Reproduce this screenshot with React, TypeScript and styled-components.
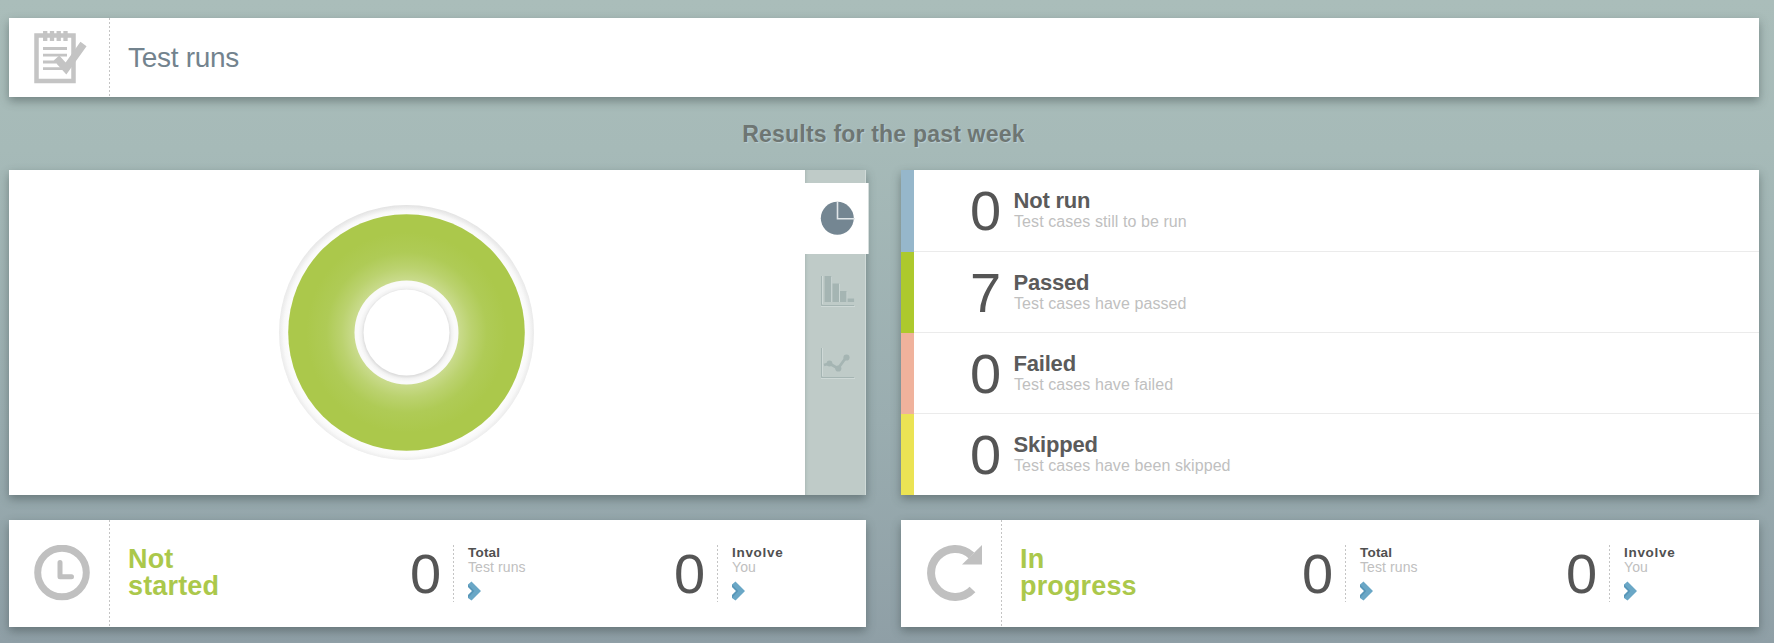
import React from "react";
import styled, { createGlobalStyle } from "styled-components";

const Global = createGlobalStyle`
  * { box-sizing: border-box; }
  body {
    margin: 0;
    font-family: "Liberation Sans", Arial, sans-serif;
    color: #555;
  }
`;

const Page = styled.main`
  height: 643px;
  padding: 18px 15px 0 9px;
  overflow: hidden;
  background: linear-gradient(#aabdba 0, #a6bab8 150px, #9aadb0 420px, #8f9fa6 643px);
`;

const Card = styled.section`
  display: flex;
  background: #fff;
  box-shadow: 0 4px 9px rgba(50, 65, 65, 0.45);
`;

const Header = styled(Card)`
  height: 79px;
`;

const IconCell = styled.div`
  display: flex;
  flex: 0 0 101px;
  align-items: center;
  padding: 0 0 2px 25px;
  background: linear-gradient(#c4c4c4 50%, transparent 50%) right top / 1px 4px repeat-y;
`;

const PageTitle = styled.h1`
  margin: 0 0 0 18px;
  font-size: 28px;
  font-weight: 400;
  line-height: 79px;
  letter-spacing: -0.3px;
  color: #73838e;
`;

const Subtitle = styled.h2`
  margin: 0 0 0 -1px;
  height: 73px;
  line-height: 75px;
  font-size: 23px;
  letter-spacing: 0.2px;
  text-align: center;
  color: #6e7673;
  text-shadow: 1px 1px 1px #bccfd3;
`;

const Columns = styled.div<{ $height: number }>`
  display: grid;
  grid-template-columns: 857px 858px;
  column-gap: 35px;
  height: ${(p) => p.$height}px;
  margin-bottom: 25px;
`;

const ChartArea = styled.div`
  flex: 1;
  padding: 34px 0 0 269px;
`;

const Tabs = styled.nav`
  width: 61px;
  padding-top: 13px;
  background: linear-gradient(90deg, #aebbb8 0, #b9c7c4 2px, #bfcbc8 4px, #bfcbc8 60px, #d0dad8 60px);
`;

const Tab = styled.div<{ $active?: boolean }>`
  width: ${(p) => (p.$active ? 64 : 61)}px;
  height: ${(p) => (p.$active ? 71 : 73)}px;
  padding: ${(p) => (p.$active ? 18 : 20)}px 0 0 15px;
  background: ${(p) => (p.$active ? "#fff" : "transparent")};
  border-right: ${(p) => (p.$active ? "1px solid #d5dddc" : "0")};
  svg { display: block; }
`;

const Results = styled(Card)`
  flex-direction: column;
`;

const ResultRow = styled.div<{ $color: string }>`
  display: flex;
  height: 81px;
  border-left: 13px solid ${(p) => p.$color};
  background: linear-gradient(#ebebeb, #ebebeb) left bottom / 100% 1px no-repeat;
  &:first-child { height: 82px; }
  &:last-child { background: none; }
`;

const BigNumber = styled.div`
  width: 32px;
  font-size: 56px;
  line-height: 64px;
  letter-spacing: -1px;
  color: #555;
`;

const ResultNumber = styled(BigNumber)`
  margin: 9px 0 0 56px;
`;

const ResultText = styled.div`
  padding: 18px 0 0 12px;
`;

const ResultName = styled.div`
  margin-left: -0.5px;
  font-size: 22px;
  font-weight: 700;
  line-height: 25px;
  letter-spacing: -0.2px;
  color: #5b5b5b;
`;

const ResultNote = styled.div`
  margin-top: 1px;
  font-size: 16px;
  line-height: 16px;
  letter-spacing: 0.08px;
  color: #c0c0c0;
`;

const RunState = styled.h3`
  width: 277px;
  margin: 26px 0 0 18px;
  font-size: 27px;
  line-height: 27px;
  letter-spacing: 0.15px;
  color: #abc84b;
`;

const Stat = styled.div<{ $width: number }>`
  display: flex;
  width: ${(p) => p.$width}px;
  padding-top: 25px;
`;

const StatNumber = styled(BigNumber)`
  width: 48px;
  padding-left: 5px;
  margin-top: -3px;
`;

const StatText = styled.div`
  height: 57px;
  padding-left: 15px;
  background: linear-gradient(#c4c4c4 50%, transparent 50%) left top / 1px 4px repeat-y;
`;

const StatLabel = styled.div<{ $tracking: number }>`
  font-size: 13.500px;
  font-weight: 700;
  line-height: 15px;
  letter-spacing: ${(p) => p.$tracking}px;
  color: #505050;
`;

const StatNote = styled.div`
  font-size: 14px;
  line-height: 14px;
  letter-spacing: 0.1px;
  color: #c0c0c0;
`;

const Arrow = styled.svg`
  display: block;
  margin-top: 7px;
`;

function NotepadIcon() {
  return (
    <svg width="54" height="54" viewBox="0 0 54 54" fill="none" stroke="#c4c4c4">
      <path d="M2.500 5.500v45.500h37V5.500z" strokeWidth="4.500" />
      <path d="M11.200 1v10M18 1v10M24.700 1v10M31.500 1v10" strokeWidth="4.300" />
      <path d="M9 18.500h24M9 25.200h24M9 32h13M9 38.700h24" strokeWidth="2.800" />
      <path d="M22.500 28l9.500 10.500L49.500 14" stroke="#c4c4c4" strokeWidth="7.500" />
    </svg>
  );
}

function ClockIcon() {
  return (
    <svg width="56" height="56" viewBox="0 0 56 56" fill="none" stroke="#c0c0c0">
      <circle cx="28" cy="27.500" r="24.300" strokeWidth="7" />
      <path d="M26 17.500v14.300h11.500" strokeWidth="5" strokeLinecap="round" strokeLinejoin="round" />
    </svg>
  );
}

function RefreshIcon() {
  return (
    <svg width="56" height="57" viewBox="0 0 56 57">
      <path d="M46.500 45.500A24 24 0 1 1 45.500 11.500" fill="none" stroke="#c0c0c0" strokeWidth="8" />
      <path d="M56 1v19.500H36z" fill="#c0c0c0" />
    </svg>
  );
}

function Donut() {
  return (
    <svg width="257" height="257" viewBox="-128.500 -128.500 257 257">
      <defs>
        <linearGradient id="rim" x2="0" y2="1">
          <stop offset="0" stopColor="#e4e4e4" />
          <stop offset=".25" stopColor="#e9e9e9" />
          <stop offset="1" stopColor="#ebebeb" />
        </linearGradient>
        <radialGradient id="rimLight" gradientUnits="userSpaceOnUse" cx="0" cy="1" r="128">
          <stop offset=".93" stopColor="#fcfcfc" />
          <stop offset=".96" stopColor="#f8f8f8" />
          <stop offset="1" stopColor="#f4f4f4" stopOpacity="0" />
        </radialGradient>
        <radialGradient id="slice" gradientUnits="userSpaceOnUse" cx="0" cy="0" r="118">
          <stop offset=".43" stopColor="#cbdc90" />
          <stop offset=".55" stopColor="#bbd26f" />
          <stop offset=".68" stopColor="#afcb56" />
          <stop offset=".85" stopColor="#abc84b" />
        </radialGradient>
        <radialGradient id="hub" gradientUnits="userSpaceOnUse" cx="0" cy="1" r="52">
          <stop offset=".82" stopColor="#dedede" />
          <stop offset=".87" stopColor="#f2f2f2" />
          <stop offset=".93" stopColor="#fafafa" />
        </radialGradient>
      </defs>
      <circle r="127.500" fill="url(#rim)" />
      <circle r="127.500" fill="url(#rimLight)" />
      <circle r="118.300" fill="url(#slice)" />
      <circle r="52" fill="url(#hub)" />
      <circle r="43" fill="#fff" />
    </svg>
  );
}

function PieIcon() {
  return (
    <svg width="35" height="35" viewBox="0 0 35 35">
      <circle cx="17.300" cy="17.300" r="16.500" fill="#748692" />
      <path d="M17.500 0.500v17.300H35" fill="none" stroke="#dfe5e8" strokeWidth="1.600" />
    </svg>
  );
}

function BarsIcon() {
  return (
    <svg width="35" height="33" viewBox="0 -1 35 33">
      <path d="M2.500 1v28M1 31.500h34" stroke="#cfd9d7" />
      <path d="M11.500 2v25M19.300 9v18M26.700 17v10" stroke="#cfd9d7" />
      <path d="M1.500 1v29.500H34" fill="none" stroke="#a5b5b3" />
      <path d="M4.600 1h6.600v26H4.600zM12.500 8.500h6.500V27h-6.500zM20 16h6.500v11H20zM27.600 23.500h6.500V27h-6.500z" fill="#a5b5b3" />
    </svg>
  );
}

function LineIcon() {
  return (
    <svg width="35" height="32" viewBox="0 0 35 32">
      <path d="M2.500 1v28M1 31.500h34" stroke="#cfd9d7" />
      <path d="M1.500 1v29.500H34" fill="none" stroke="#a5b5b3" />
      <path d="M4 18l5.500-1.500L18 21.500l8-11" fill="none" stroke="#a5b5b3" strokeWidth="2.800" />
      <circle cx="9.500" cy="16.500" r="2.900" fill="#a5b5b3" />
      <circle cx="18.300" cy="21.500" r="3.100" fill="#a5b5b3" />
      <circle cx="26.500" cy="10.500" r="3.100" fill="#a5b5b3" />
    </svg>
  );
}

const results = [
  { name: "Not run", note: "Test cases still to be run", count: 0, color: "#96b7cb" },
  { name: "Passed", note: "Test cases have passed", count: 7, color: "#adc92d" },
  { name: "Failed", note: "Test cases have failed", count: 0, color: "#f0b29c" },
  { name: "Skipped", note: "Test cases have been skipped", count: 0, color: "#ebe354" },
];

function StatBlock({ label, note, tracking, width }: { label: string; note: string; tracking: number; width: number }) {
  return (
    <Stat $width={width}>
      <StatNumber>0</StatNumber>
      <StatText>
        <StatLabel $tracking={tracking}>{label}</StatLabel>
        <StatNote>{note}</StatNote>
        <Arrow width="14" height="20" viewBox="0 0 14 20">
          <path d="M0 3.500L3.500 0.500L13 10L3.500 19.500L0 17V14.500L4.500 10L0 5.500z" fill="#6aa7c6" />
          <path d="M0 3.500L6.300 10L0 17V14L4 10L0 6z" fill="#5796b8" />
        </Arrow>
      </StatText>
    </Stat>
  );
}

function RunCard({ icon, first, second }: { icon: React.ReactNode; first: string; second: string }) {
  return (
    <Card>
      <IconCell>{icon}</IconCell>
      <RunState>{first}<br />{second}</RunState>
      <StatBlock label="Total" note="Test runs" tracking={0.2} width={264} />
      <StatBlock label="Involve" note="You" tracking={0.7} width={190} />
    </Card>
  );
}

export default function App() {
  return (
    <>
      <Global />
      <Page>
        <Header>
          <IconCell><NotepadIcon /></IconCell>
          <PageTitle>Test runs</PageTitle>
        </Header>
        <Subtitle>Results for the past week</Subtitle>
        <Columns $height={325}>
          <Card>
            <ChartArea><Donut /></ChartArea>
            <Tabs>
              <Tab $active><PieIcon /></Tab>
              <Tab><BarsIcon /></Tab>
              <Tab><LineIcon /></Tab>
            </Tabs>
          </Card>
          <Results>
            {results.map((r) => (
              <ResultRow key={r.name} $color={r.color}>
                <ResultNumber>{r.count}</ResultNumber>
                <ResultText>
                  <ResultName>{r.name}</ResultName>
                  <ResultNote>{r.note}</ResultNote>
                </ResultText>
              </ResultRow>
            ))}
          </Results>
        </Columns>
        <Columns $height={107}>
          <RunCard icon={<ClockIcon />} first="Not" second="started" />
          <RunCard icon={<RefreshIcon />} first="In" second="progress" />
        </Columns>
      </Page>
    </>
  );
}
